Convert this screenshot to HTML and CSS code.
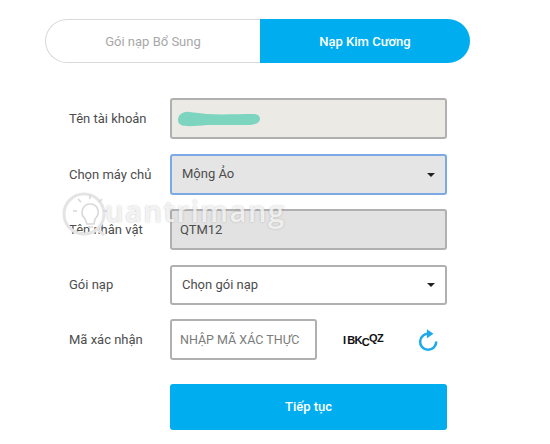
FILE: index.html
```html
<!DOCTYPE html>
<html lang="vi">
<head>
<meta charset="utf-8">
<title>Nạp Kim Cương</title>
<link rel="stylesheet" href="styles.css">
</head>
<body>
<div class="page">
  <div class="tabs">
    <div class="tab">Gói nạp Bổ Sung</div>
    <div class="tab active">Nạp Kim Cương</div>
  </div>
  <form class="form">
    <div class="row">
      <label class="label">Tên tài khoản</label>
      <div class="field account">
        <svg class="scribble" viewBox="0 0 84 16" width="84" height="16" aria-hidden="true">
          <path d="M1 9 C1 4 6 0 12 1 L30 3 C45 4 60 3 76 3 C81 3 83 5 83 8 C83 12 78 14 70 14 L30 14 C20 15 8 16 4 14 C2 13 1 11 1 9Z" fill="#7dd5c0"/>
        </svg>
      </div>
    </div>
    <div class="row row-offset">
      <label class="label">Chọn máy chủ</label>
      <div class="field select focus">Mộng Ảo<span class="caret"></span></div>
    </div>
    <div class="row">
      <label class="label">Tên nhân vật</label>
      <div class="field readonly">QTM12</div>
    </div>
    <div class="row row-offset row-short">
      <label class="label">Gói nạp</label>
      <div class="field select plain">Chọn gói nạp<span class="caret"></span></div>
    </div>
    <div class="row">
      <label class="label">Mã xác nhận</label>
      <div class="field captcha-input">NHẬP MÃ XÁC THỰC</div>
      <div class="captcha"><span>I</span><span>B</span><span>K</span><span class="low">C</span><span class="high">Q</span><span class="high">Z</span></div>
      <svg class="refresh" viewBox="0 0 24 24" width="22" height="24" aria-hidden="true">
        <path d="M13.5 5.2 A8.8 8.8 0 1 0 21 13.6" fill="none" stroke="#1fa9ea" stroke-width="2.8"/>
        <path d="M10.8 0.4 L18 5.2 L10.8 10 Z" fill="#1fa9ea"/>
      </svg>
    </div>
    <div class="row submit-row">
      <button type="button" class="submit">Tiếp tục</button>
    </div>
  </form>
  <div class="watermark">
    <svg class="bulb" viewBox="0 0 50 50" width="50" height="50" aria-hidden="true">
      <circle cx="24" cy="25" r="20" fill="none" stroke="#e4e4e4" stroke-width="3"/>
      <path d="M36 39 L44 46" stroke="#e4e4e4" stroke-width="3"/>
      <path d="M25 30 C19 24 23 15 30 15 C38 15 41 24 35 30 L34 35 L27 35 Z" fill="none" stroke="#d8d8d8" stroke-width="1.6"/>
      <path d="M30 6v4M18 10l3 3M42 10l-3 3M13 22h4M47 22h-4M28 38h5" stroke="#d8d8d8" stroke-width="1.6"/>
    </svg>
    <span class="mark-text">uantrimang</span>
  </div>
</div>
</body>
</html>
```
FILE: styles.css
```css
* { box-sizing: border-box; }
html, body { margin: 0; padding: 0; background: #fff; }
body { font-family: Roboto, "Liberation Sans", sans-serif; color: #4a4a4a; }
.page { position: relative; width: 550px; height: 444px; padding: 19px 0 0 45px; overflow: hidden; }
.tabs { display: flex; width: 425px; height: 44px; }
.tab {
  flex: 0 0 215px; display: flex; align-items: center; justify-content: center;
  font-size: 13px; color: #a8a8a8;
  border: 1px solid #d9d9d9; border-right: 0; border-radius: 22px 0 0 22px;
}
.tab.active { flex: 0 0 210px; background: #00aeef; color: #fff; border: 0; border-radius: 0 22px 22px 0; font-weight: 500; }
.form { display: flex; flex-direction: column; gap: 14px; margin-top: 35px; padding-left: 24px; }
.row { display: flex; align-items: center; height: 41px; }
.row-offset { margin-top: 1px; }
.row-short { height: 40px; }
.row-short .label { padding-bottom: 2px; }
.label { flex: 0 0 101px; font-size: 13px; color: #4d4d4d; }
.field {
  position: relative; display: flex; align-items: center; width: 277px; height: 100%; padding: 0 10px;
  font-size: 13px; color: #4d4d4d; border: 2px solid #b0b0b0; border-radius: 3px;
}
.account { background: #ebeae4; }
.scribble { display: block; margin-left: -5px; }
.select { padding-bottom: 2px; }
.select.focus { background: #e5e5e5; border-color: #7ba9e6; }
.select.plain { background: #fff; }
.readonly { background: #e2e2e2; padding-left: 8px; }
.caret {
  position: absolute; right: 10px; top: 50%; margin-top: -2px;
  border-style: solid; border-width: 4px 4px 0; border-color: #222 transparent transparent;
}
.captcha-input { width: 147px; padding: 0 8px; color: #7b7b7b; font-size: 12.5px; white-space: nowrap; }
.captcha { display: flex; align-items: center; margin-left: 26px; width: 42px; font-family: "Liberation Sans", sans-serif; font-size: 11px; font-weight: 700; color: #111; letter-spacing: -0.7px; }
.captcha span:first-child { margin-right: 2px; }
.low { position: relative; top: 2px; }
.high { position: relative; top: -2px; }
.refresh { margin-left: 32px; }
.submit-row { height: 46px; margin-top: 10px; padding-left: 101px; }
.submit {
  width: 277px; height: 46px; padding: 0 0 2px; border: 0; border-radius: 3px; background: #00aeef; color: #fff;
  font-family: Roboto, "Liberation Sans", sans-serif; font-size: 13px; font-weight: 500;
}
.watermark { position: absolute; left: 60px; top: 189px; display: flex; align-items: flex-end; pointer-events: none; }
.mark-text {
  font-family: "Open Sans", sans-serif; font-size: 29px; font-weight: 600; line-height: 40px; margin: 0 0 8px -5px; letter-spacing: 1.6px;
  color: rgba(255,255,255,0.8); text-shadow: 0 0 2px rgba(110,110,110,0.45);
}
```
